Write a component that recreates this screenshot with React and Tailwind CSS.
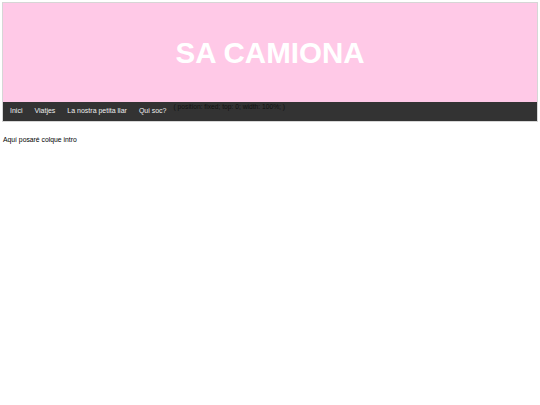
export default function App() {
  const links = ['Inici', 'Viatjes', 'La nostra petita llar', 'Qui soc?'];

  return (
    <div className="min-h-screen bg-white p-[2px] font-['Liberation_Sans',Arial,sans-serif]">
      {/* Header */}
      <div className="border border-[#d6d6d6]">
        <div className="h-[99px] bg-[#ffc9e7] flex items-center justify-center">
          <h1 className="text-[29.5px] font-bold text-white leading-none">SA CAMIONA</h1>
        </div>
        <nav className="h-[19px] bg-[#333333] flex items-stretch pl-[1px]">
          {links.map((l) => (
            <a key={l} href="#" className="px-[6px] flex items-center text-[7px] text-[#eeeeee]">
              {l}
            </a>
          ))}
          <span className="ml-[1px] text-[6.7px] text-[#111111] leading-[9px]">
            ( position: fixed; top: 0; width: 100%; )
          </span>
        </nav>
      </div>

      <p className="mt-[13px] ml-[1px] text-[6.8px] text-black">Aquí posaré colque intro</p>
    </div>
  );
}
